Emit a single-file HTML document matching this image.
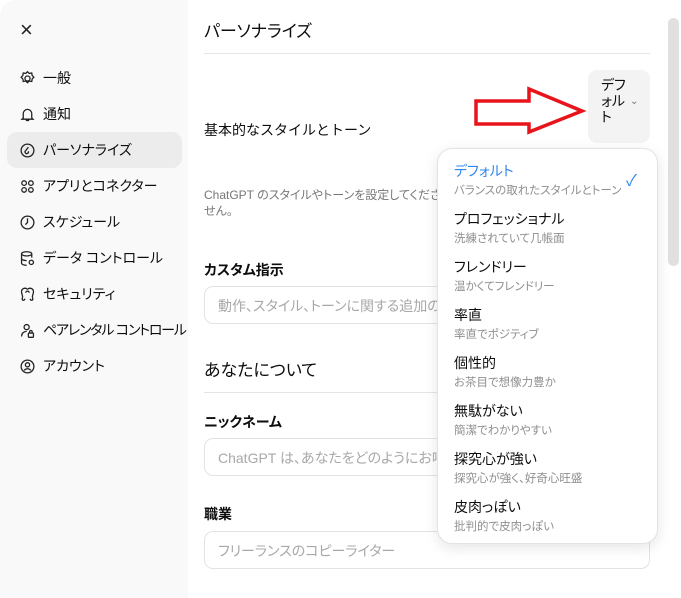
<!DOCTYPE html><html><head><meta charset="utf-8"><style>
*{margin:0;padding:0;box-sizing:border-box}
body{width:681px;height:598px;overflow:hidden;background:#fff;font-family:"Liberation Sans","Noto Sans CJK JP",sans-serif;color:#0d0d0d;position:relative}
.p{font-feature-settings:"palt"}
.side{position:absolute;left:0;top:0;width:188px;height:598px;background:#f9f9f9;border-top-left-radius:16px}
.ab{position:absolute;white-space:nowrap}
.nav{position:absolute;left:7px;width:175px;height:36px;border-radius:10px;font-size:14px;display:flex;align-items:center;padding-left:12px;white-space:nowrap;font-feature-settings:"palt"}
.nav svg{width:17px;height:17px;margin-right:7px;fill:none;stroke:#222;stroke-width:1.5;flex:none}
.sel{background:#ececec}
.h{font-size:17px;font-feature-settings:"palt"}
.b{font-size:14px;font-weight:bold;font-feature-settings:"palt"}
.inp{position:absolute;left:204px;width:446px;height:38px;border:1px solid #e3e3e3;border-radius:9px;font-size:14px;color:#a8a8a8;padding:9px 13px;white-space:nowrap;overflow:hidden;font-feature-settings:"palt"}
.dd{position:absolute;left:437px;top:148px;width:221px;height:396px;background:#fff;border:1px solid #e3e3e3;border-radius:15px;box-shadow:0 4px 14px rgba(0,0,0,.1);font-feature-settings:"palt"}
.it{position:absolute;left:16px;font-size:14px;white-space:nowrap}
.it small{display:block;font-size:11.5px;color:#8f8f8f;margin-top:1px}
</style></head><body>
<div class="side"></div>
<div class="ab" style="left:20px;top:19px;font-size:22px;color:#222;line-height:22px">×</div>
<div class="nav" style="top:60px"><svg viewBox="0 0 20 20"><circle cx="10" cy="10" r="3"/><path d="M10 2l2 2 3-.5.5 3 2 2-2 2-.5 3-3-.5-2 2-2-2-3 .5-.5-3-2-2 2-2 .5-3 3 .5z"/></svg>一般</div>
<div class="nav" style="top:96px"><svg viewBox="0 0 20 20"><path d="M5 14V9a5 5 0 0110 0v5l1.5 1.5h-13zM8 17h4"/></svg>通知</div>
<div class="nav sel" style="top:132px"><svg viewBox="0 0 20 20"><circle cx="10" cy="10" r="7.5"/><path d="M11 6l-3 4a2 2 0 103 1"/></svg>パーソナライズ</div>
<div class="nav" style="top:168px"><svg viewBox="0 0 20 20"><circle cx="6" cy="6" r="2.7"/><circle cx="14" cy="6" r="2.7"/><circle cx="6" cy="14" r="2.7"/><circle cx="14" cy="14" r="2.7"/></svg>アプリとコネクター</div>
<div class="nav" style="top:204px"><svg viewBox="0 0 20 20"><circle cx="10" cy="10" r="7.5"/><path d="M10 5v5l-2.5 2.5"/></svg>スケジュール</div>
<div class="nav" style="top:240px"><svg viewBox="0 0 20 20"><ellipse cx="9" cy="4.5" rx="6" ry="2.5"/><path d="M3 4.5v11c0 1.4 2.7 2.5 6 2.5M15 4.5V9M3 10c0 1.4 2.7 2.5 6 2.5"/><circle cx="14.5" cy="14.5" r="2.5"/></svg>データ コントロール</div>
<div class="nav" style="top:276px"><svg viewBox="0 0 20 20"><path d="M10 4a4 4 0 00-7 3c0 3 2 4 1 7s2 4 3 1M10 4a4 4 0 017 3c0 3-2 4-1 7s-2 4-3 1M8 8a2 2 0 014 0"/></svg>セキュリティ</div>
<div class="nav" style="top:312px"><svg viewBox="0 0 20 20"><circle cx="9" cy="6" r="3"/><path d="M3 17c0-4 3-6 6-6"/><rect x="11" y="13" width="6" height="5" rx="1"/><path d="M12.5 13v-1.5a1.5 1.5 0 013 0V13"/></svg><span style="letter-spacing:-1.2px">ペアレンタル コントロール</span></div>
<div class="nav" style="top:348px"><svg viewBox="0 0 20 20"><circle cx="10" cy="10" r="7.5"/><circle cx="10" cy="8" r="2.5"/><path d="M6 14.5c2-2.5 6-2.5 8 0"/></svg>アカウント</div>

<div class="ab h" style="left:204px;top:17px">パーソナライズ</div>
<div class="ab" style="left:204px;top:53px;width:446px;border-top:1px solid #e5e5e5"></div>
<div class="ab" style="left:204px;top:120px;font-size:14px">基本的なスタイルとトーン</div>
<div class="ab" style="left:588px;top:70px;width:62px;height:73px;background:#f3f3f3;border-radius:9px"></div>
<div class="ab p" style="left:601px;top:77px;font-size:14px;line-height:16px">デフ<br>ォル<br>ト</div>
<div class="ab" style="left:630px;top:96px;font-size:10px;color:#777">⌄</div>
<svg class="ab" style="left:470px;top:84px" width="118" height="54" viewBox="470 84 118 54"><polygon points="476,101 529,101 529,89 582,111 529,132 529,124 476,124" fill="#fff" stroke="#e8141b" stroke-width="3.5"/></svg>
<div class="ab p" style="left:204px;top:187px;font-size:12px;color:#777;line-height:16px">ChatGPT のスタイルやトーンを設定してください。Cl<br>せん。</div>
<div class="ab b" style="left:204px;top:260px">カスタム指示</div>
<div class="inp" style="top:286px">動作、スタイル、トーンに関する追加の設定</div>
<div class="ab h" style="left:204px;top:356px">あなたについて</div>
<div class="ab" style="left:204px;top:392px;width:446px;border-top:1px solid #e5e5e5"></div>
<div class="ab b" style="left:204px;top:412px">ニックネーム</div>
<div class="inp" style="top:438px">ChatGPT は、あなたをどのようにお呼びすればよいですか？</div>
<div class="ab b" style="left:204px;top:504px">職業</div>
<div class="inp" style="top:531px">フリーランスのコピーライター</div>
<div class="ab" style="left:668px;top:18px;width:11px;height:248px;background:#e0e0e0;border-radius:6px"></div>
<div class="dd">
<div class="it" style="top:12px;color:#2f86eb">デフォルト<small>バランスの取れたスタイルとトーン</small></div>
<div class="ab" style="left:188px;top:18px;color:#2f86eb;font-size:16px">✓</div>
<div class="it" style="top:60px">プロフェッショナル<small>洗練されていて几帳面</small></div>
<div class="it" style="top:108px">フレンドリー<small>温かくてフレンドリー</small></div>
<div class="it" style="top:156px">率直<small>率直でポジティブ</small></div>
<div class="it" style="top:204px">個性的<small>お茶目で想像力豊か</small></div>
<div class="it" style="top:252px">無駄がない<small>簡潔でわかりやすい</small></div>
<div class="it" style="top:300px">探究心が強い<small>探究心が強く、好奇心旺盛</small></div>
<div class="it" style="top:348px">皮肉っぽい<small>批判的で皮肉っぽい</small></div>
</div>
</body></html>
